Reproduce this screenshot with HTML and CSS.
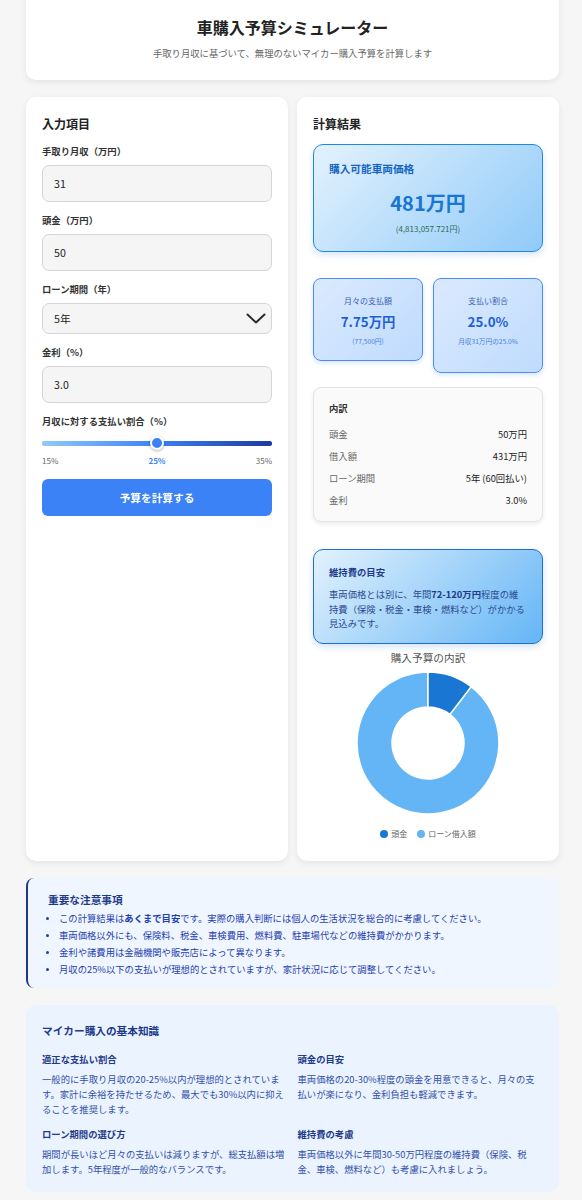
FILE: index.html
```html
<!DOCTYPE html>
<html lang="ja">
<head>
  <meta charset="UTF-8" />
  <meta name="viewport" content="width=device-width, initial-scale=1.0"/>
  <title>車購入予算シミュレーター</title>
  <link rel="stylesheet" href="styles.css">
</head>
<body>
  <div class="page">
    <header class="header">
      <h1>車購入予算シミュレーター</h1>
      <p>手取り月収に基づいて、無理のないマイカー購入予算を計算します</p>
    </header>

    <div class="columns">
      <section class="panel">
        <h2>入力項目</h2>

        <div class="field">
          <label for="income">手取り月収（万円）</label>
          <input id="income" type="text" value="31">
        </div>

        <div class="field">
          <label for="down">頭金（万円）</label>
          <input id="down" type="text" value="50">
        </div>

        <div class="field">
          <label for="term">ローン期間（年）</label>
          <div class="select-wrap">
            <select id="term">
              <option>3年</option>
              <option selected>5年</option>
              <option>7年</option>
            </select>
            <svg class="chevron" width="20" height="11" viewBox="0 0 20 11">
              <path d="M1.5 1.5 L10 9.5 L18.5 1.5" fill="none" stroke="#2b2b2b" stroke-width="2" stroke-linecap="round" stroke-linejoin="round"/>
            </svg>
          </div>
        </div>

        <div class="field">
          <label for="rate">金利（%）</label>
          <input id="rate" type="text" value="3.0">
        </div>

        <div class="field">
          <label for="ratio">月収に対する支払い割合（%）</label>
          <input id="ratio" class="range" type="range" min="15" max="35" value="25">
          <div class="range-scale">
            <span>15%</span>
            <span class="current">25%</span>
            <span>35%</span>
          </div>
        </div>

        <button class="calc-btn">予算を計算する</button>
      </section>

      <section class="panel">
        <h2>計算結果</h2>

        <div class="result-main">
          <div class="result-main-label">購入可能車両価格</div>
          <div class="result-main-value">481万円</div>
          <div class="result-main-sub">(4,813,057.721円)</div>
        </div>

        <div class="result-pair">
          <div class="mini-card">
            <div class="mini-label">月々の支払額</div>
            <div class="mini-value">7.75万円</div>
            <div class="mini-sub">(77,500円)</div>
          </div>
          <div class="mini-card mini-card-tall">
            <div class="mini-label">支払い割合</div>
            <div class="mini-value">25.0%</div>
            <div class="mini-sub">月収31万円の25.0%</div>
          </div>
        </div>

        <div class="breakdown">
          <h3>内訳</h3>
          <div class="row"><span>頭金</span><span class="val">50万円</span></div>
          <div class="row"><span>借入額</span><span class="val">431万円</span></div>
          <div class="row"><span>ローン期間</span><span class="val">5年 (60回払い)</span></div>
          <div class="row"><span>金利</span><span class="val">3.0%</span></div>
        </div>

        <div class="upkeep">
          <h3>維持費の目安</h3>
          <p>車両価格とは別に、年間<strong>72-120万円</strong>程度の維持費（保険・税金・車検・燃料など）がかかる見込みです。</p>
        </div>

        <div class="chart">
          <div class="chart-title">購入予算の内訳</div>
          <svg class="donut" width="144" height="144" viewBox="0 0 144 144">
            <path d="M115.15 15.62 A71 71 0 1 1 72 1 L72 36 A36 36 0 1 0 93.88 43.41 Z" fill="#64b5f6" stroke="#fff" stroke-width="1.5"/>
            <path d="M72 1 A71 71 0 0 1 115.15 15.62 L93.88 43.41 A36 36 0 0 0 72 36 Z" fill="#1976d2" stroke="#fff" stroke-width="1.5"/>
          </svg>
          <div class="legend">
            <span class="legend-item"><i class="dot dot-dark"></i>頭金</span>
            <span class="legend-item"><i class="dot dot-light"></i>ローン借入額</span>
          </div>
        </div>
      </section>
    </div>

    <section class="notice">
      <h3>重要な注意事項</h3>
      <ul>
        <li>この計算結果は<strong>あくまで目安</strong>です。実際の購入判断には個人の生活状況を総合的に考慮してください。</li>
        <li>車両価格以外にも、保険料、税金、車検費用、燃料費、駐車場代などの維持費がかかります。</li>
        <li>金利や諸費用は金融機関や販売店によって異なります。</li>
        <li>月収の25%以下の支払いが理想的とされていますが、家計状況に応じて調整してください。</li>
      </ul>
    </section>

    <section class="tips">
      <h3>マイカー購入の基本知識</h3>
      <div class="tips-grid">
        <div>
          <h4>適正な支払い割合</h4>
          <p>一般的に手取り月収の20-25%以内が理想的とされています。家計に余裕を持たせるため、最大でも30%以内に抑えることを推奨します。</p>
        </div>
        <div>
          <h4>頭金の目安</h4>
          <p>車両価格の20-30%程度の頭金を用意できると、月々の支払いが楽になり、金利負担も軽減できます。</p>
        </div>
        <div>
          <h4>ローン期間の選び方</h4>
          <p>期間が長いほど月々の支払いは減りますが、総支払額は増加します。5年程度が一般的なバランスです。</p>
        </div>
        <div>
          <h4>維持費の考慮</h4>
          <p>車両価格以外に年間30-50万円程度の維持費（保険、税金、車検、燃料など）も考慮に入れましょう。</p>
        </div>
      </div>
    </section>
  </div>
</body>
</html>
```

FILE: styles.css
```css
body {
  font-family: "Noto Sans CJK JP", "Noto Sans", sans-serif;
  background-color: #f6f6f7;
  margin: 0;
  padding: 0;
  color: #222;
}

.page {
  width: 533px;
  margin-left: 26px;
}

h1, h2, h3, h4, p, ul {
  margin: 0;
}

/* header */
.header {
  background-color: #fff;
  border-radius: 10px;
  margin-top: -8px;
  padding: 23px 20px 20px;
  text-align: center;
  box-shadow: 0 2px 6px rgba(0, 0, 0, 0.08);
}

.header h1 {
  font-size: 16px;
  line-height: 24px;
  font-weight: 700;
  color: #222;
}

.header p {
  margin-top: 8px;
  font-size: 9.33px;
  line-height: 13px;
  color: #666;
}

/* two columns */
.columns {
  display: grid;
  grid-template-columns: 262px 262px;
  gap: 9px;
  margin-top: 17px;
}

.panel {
  background-color: #fff;
  border-radius: 10px;
  padding: 18px 16px 21px;
  box-shadow: 0 2px 6px rgba(0, 0, 0, 0.08);
}

.panel h2 {
  font-size: 12px;
  line-height: 18px;
  font-weight: 700;
  color: #222;
}

.field {
  margin-top: 11px;
}

.field label {
  display: block;
  font-size: 9.33px;
  line-height: 14px;
  font-weight: 700;
  color: #333;
  margin-bottom: 7px;
}

.field input[type="text"],
.field select {
  width: 100%;
  box-sizing: border-box;
  height: 37px;
  padding: 0 11px;
  font-family: inherit;
  font-size: 10.67px;
  color: #222;
  background-color: #f5f5f5;
  border: 1px solid #d4d4da;
  border-radius: 7px;
  outline: none;
}

.select-wrap {
  position: relative;
}

.field select {
  height: 31px;
  appearance: none;
  -webkit-appearance: none;
}

.chevron {
  position: absolute;
  right: 6px;
  top: 10px;
  pointer-events: none;
}

/* payment ratio slider */
.range {
  -webkit-appearance: none;
  appearance: none;
  display: block;
  width: 100%;
  height: 14px;
  margin: 8px 0 0;
  background: transparent;
}

.range::-webkit-slider-runnable-track {
  height: 5px;
  border-radius: 2px;
  background: linear-gradient(90deg, #90caf9 0%, #3b82f6 50%, #1e3a9f 100%);
}

.range::-webkit-slider-thumb {
  -webkit-appearance: none;
  width: 14px;
  height: 14px;
  margin-top: -4.5px;
  border-radius: 50%;
  background-color: #3b82f6;
  border: 2px solid #fff;
  box-sizing: border-box;
  box-shadow: 0 1px 3px rgba(0, 0, 0, 0.3);
}

.range-scale {
  display: flex;
  justify-content: space-between;
  margin-top: 5px;
  font-size: 8px;
  line-height: 12px;
  color: #666;
}

.range-scale .current {
  color: #3b82f6;
  font-weight: 700;
}

.calc-btn {
  display: block;
  width: 100%;
  height: 37px;
  margin-top: 12px;
  font-family: inherit;
  font-size: 10.67px;
  font-weight: 700;
  color: #fff;
  background-color: #3b82f6;
  border: none;
  border-radius: 6px;
  cursor: pointer;
}

/* results */
.result-main {
  margin-top: 11px;
  padding: 16px 15px;
  border: 1px solid #1e88e5;
  border-radius: 10px;
  background: linear-gradient(135deg, #e3f2fd 0%, #90caf9 100%);
  box-shadow: 0 3px 6px rgba(25, 118, 210, 0.18);
}

.result-main-label {
  font-size: 10.67px;
  line-height: 15px;
  font-weight: 700;
  color: #1565c0;
}

.result-main-value {
  margin-top: 13px;
  font-size: 20px;
  line-height: 28px;
  font-weight: 700;
  color: #1976d2;
  text-align: center;
}

.result-main-sub {
  margin-top: 6px;
  font-size: 8px;
  line-height: 12px;
  color: #2f6a58;
  text-align: center;
}

.result-pair {
  display: grid;
  grid-template-columns: 1fr 1fr;
  gap: 10px;
  align-items: start;
  margin-top: 26px;
}

.mini-card {
  padding: 15px 6px 14px;
  text-align: center;
  border: 1px solid #4a8ef5;
  border-radius: 8px;
  background: linear-gradient(135deg, #dbeafe 0%, #bfdbfe 100%);
  box-shadow: 0 2px 5px rgba(59, 130, 246, 0.2);
}

.mini-card-tall {
  padding-bottom: 26px;
}

.mini-label {
  font-size: 8px;
  line-height: 13px;
  color: #3d5db5;
}

.mini-value {
  margin-top: 5px;
  font-size: 13.33px;
  line-height: 20px;
  font-weight: 700;
  color: #1d5fd8;
}

.mini-sub {
  margin-top: 4px;
  font-size: 6.67px;
  line-height: 10px;
  color: #4a7fe0;
}

.breakdown {
  margin-top: 14px;
  padding: 13px 15px 10px;
  background-color: #fafafa;
  border: 1px solid #e4e4e7;
  border-radius: 8px;
  box-shadow: 0 2px 5px rgba(0, 0, 0, 0.08);
}

.breakdown h3 {
  font-size: 9.33px;
  line-height: 14px;
  font-weight: 700;
  color: #333;
  margin-bottom: 8px;
}

.breakdown .row {
  display: flex;
  justify-content: space-between;
  font-size: 9.33px;
  line-height: 22px;
  color: #666;
}

.breakdown .val {
  color: #222;
}

.upkeep {
  margin-top: 27px;
  padding: 15px 15px 12px;
  border: 1px solid #1e6fd0;
  border-radius: 10px;
  background: linear-gradient(135deg, #e3f2fd 0%, #64b5f6 100%);
  box-shadow: 0 3px 6px rgba(25, 118, 210, 0.2);
}

.upkeep h3 {
  font-size: 9.33px;
  line-height: 14px;
  font-weight: 700;
  color: #1e3a8a;
}

.upkeep p {
  margin-top: 8px;
  font-size: 9.33px;
  line-height: 14.5px;
  color: #2b4a90;
}

.upkeep strong {
  color: #1e3a8a;
}

/* doughnut chart */
.chart {
  text-align: center;
}

.chart-title {
  margin-top: 6px;
  font-size: 10.67px;
  line-height: 15px;
  color: #555;
}

.donut {
  display: block;
  margin: 6px auto 0;
}

.legend {
  display: flex;
  justify-content: center;
  gap: 10px;
  margin-top: 13px;
  font-size: 8px;
  line-height: 12px;
  color: #666;
}

.legend-item {
  display: flex;
  align-items: center;
  gap: 3px;
}

.dot {
  display: inline-block;
  width: 8px;
  height: 8px;
  border-radius: 50%;
}

.dot-dark {
  background-color: #1976d2;
}

.dot-light {
  background-color: #64b5f6;
}

/* notes */
.notice {
  margin-top: 17px;
  padding: 14px 20px 10px;
  background-color: #f0f6ff;
  border-left: 2px solid #1e3a8a;
  border-radius: 8px;
}

.notice h3 {
  font-size: 10.67px;
  line-height: 15px;
  font-weight: 700;
  color: #1e3a8a;
}

.notice ul {
  margin-top: 3px;
  padding-left: 11px;
}

.notice li {
  font-size: 9.33px;
  line-height: 17px;
  color: #1e40af;
}

.notice li::marker {
  font-size: 8px;
}

.tips {
  margin-top: 17px;
  padding: 18px 16px 15px;
  background-color: #ebf3ff;
  border-radius: 10px;
}

.tips h3 {
  font-size: 10.67px;
  line-height: 15px;
  font-weight: 700;
  color: #1e3a8a;
}

.tips-grid {
  display: grid;
  grid-template-columns: 1fr 1fr;
  column-gap: 10px;
  row-gap: 11px;
  margin-top: 15px;
}

.tips h4 {
  font-size: 9.33px;
  line-height: 13px;
  font-weight: 700;
  color: #1e3a8a;
}

.tips p {
  margin-top: 6px;
  font-size: 9.33px;
  line-height: 15px;
  color: #3150a8;
}
```
